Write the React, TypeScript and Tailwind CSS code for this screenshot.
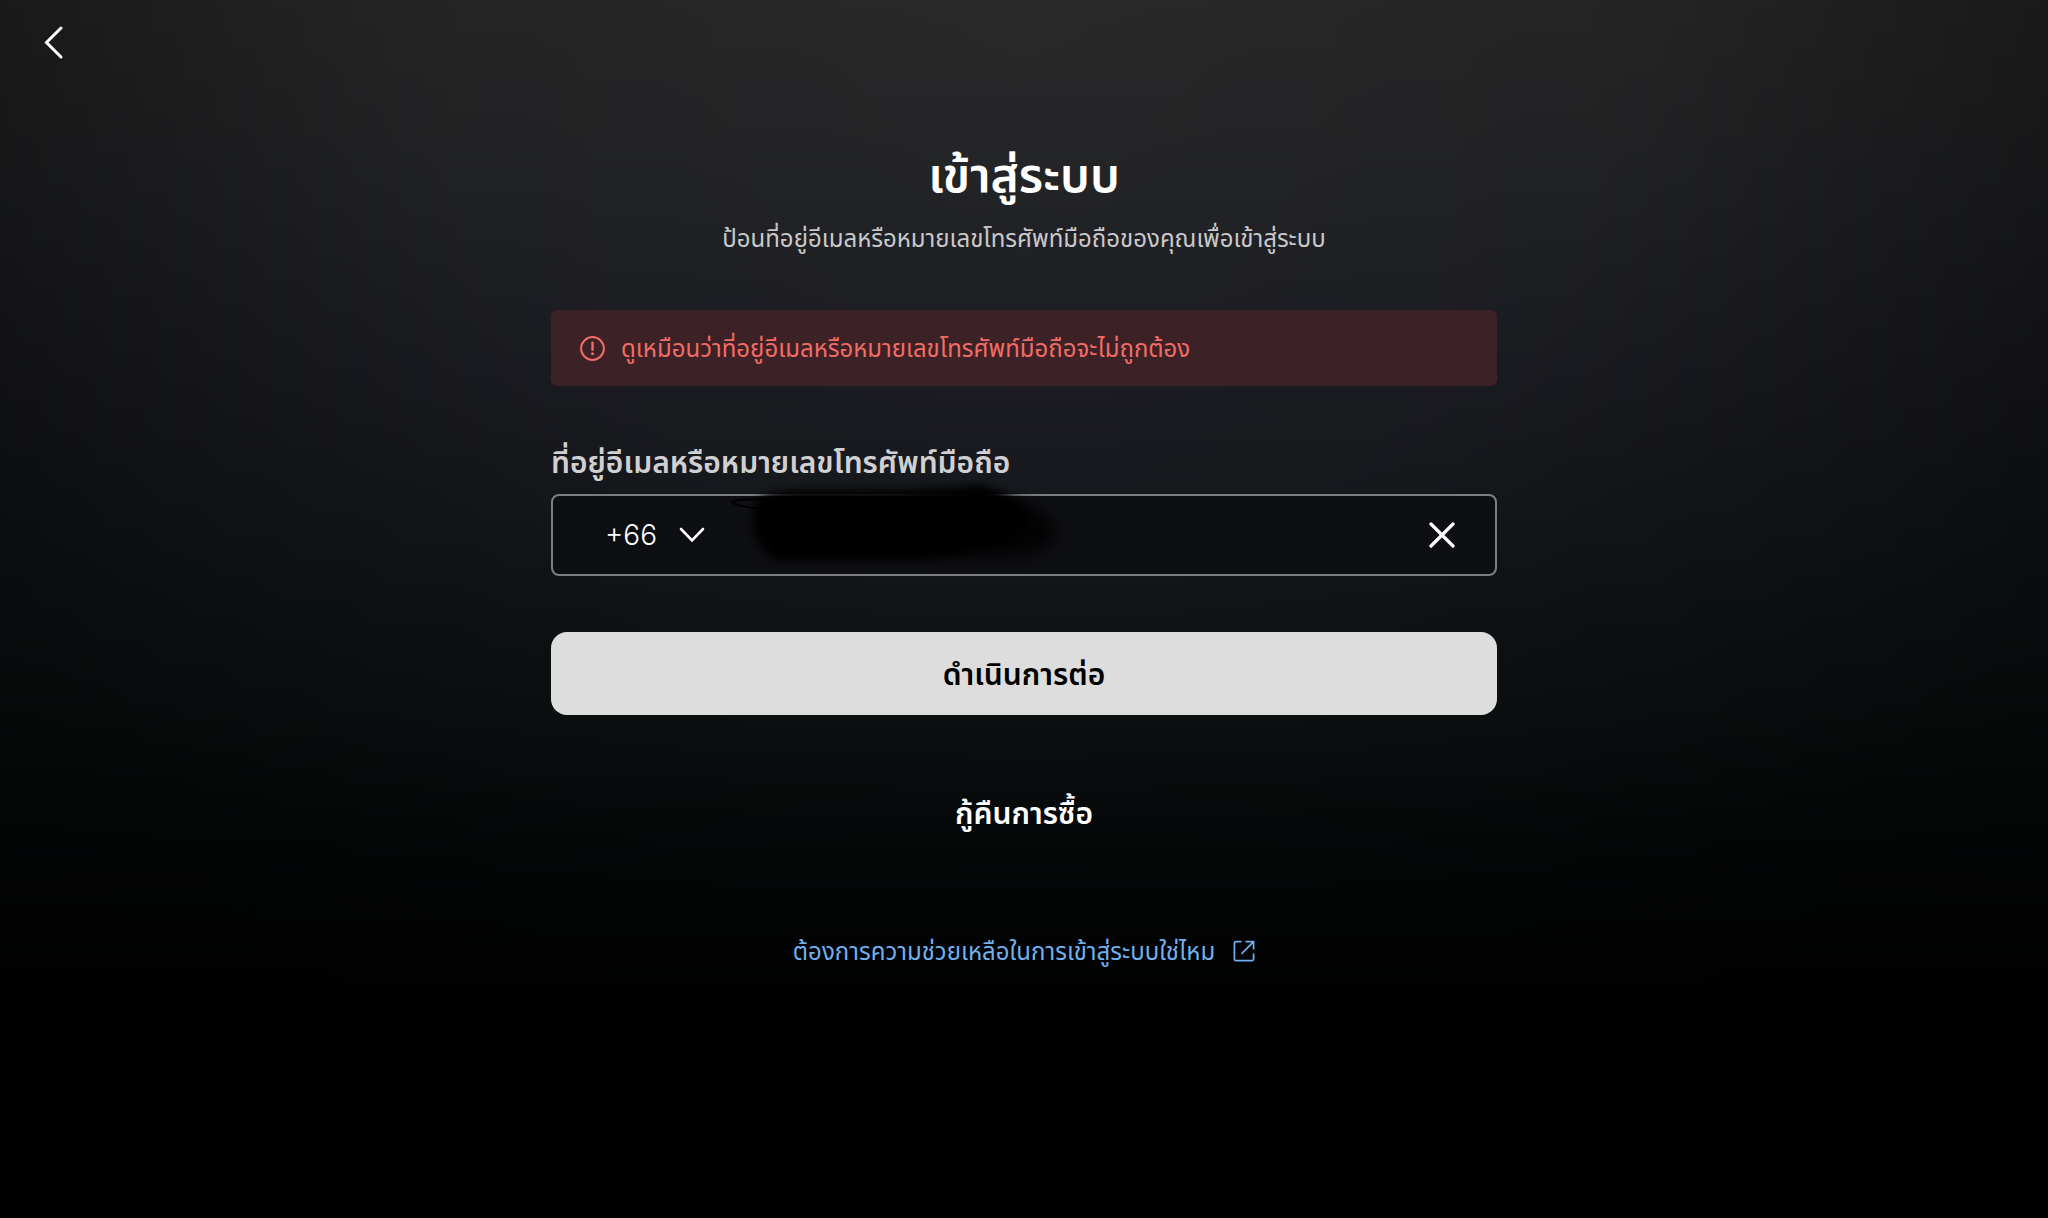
import { useState } from "react";

const DIAL_CODES = ["+66", "+65", "+60", "+62"];

function BackIcon() {
  return (
    <svg width="40" height="40" viewBox="0 0 40 40" fill="none" stroke="currentColor" strokeWidth="3" strokeLinecap="round" strokeLinejoin="miter">
      <path d="M29 6 L14.5 20.5 L29 35" />
    </svg>
  );
}

function AlertIcon() {
  return (
    <svg className="shrink-0" width="26" height="26" viewBox="0 0 26 26" fill="none" stroke="currentColor" strokeWidth="2">
      <circle cx="13.5" cy="13.5" r="11.4" />
      <path d="M13.5 7.8 V14.8" strokeWidth="2.4" strokeLinecap="round" />
      <circle cx="13.5" cy="18.8" r="1.5" fill="currentColor" stroke="none" />
    </svg>
  );
}

function ChevronIcon() {
  return (
    <svg className="pointer-events-none" width="26" height="16" viewBox="0 0 26 16" fill="none" stroke="currentColor" strokeWidth="2.6" strokeLinecap="round">
      <path d="M2 2 L13 13.4 L24 2" />
    </svg>
  );
}

function ClearIcon() {
  return (
    <svg width="26" height="26" viewBox="0 0 26 26" fill="none" stroke="currentColor" strokeWidth="3.2" strokeLinecap="round">
      <path d="M2 2 L24 24 M24 2 L2 24" />
    </svg>
  );
}

function ExternalIcon() {
  return (
    <svg className="shrink-0" width="22" height="22" viewBox="0 0 22 22" fill="none" stroke="currentColor" strokeWidth="1.7">
      <path d="M8.5 1.6 H3 Q1.4 1.6 1.4 3.2 V19 Q1.4 20.6 3 20.6 H19 Q20.6 20.6 20.6 19 V13.5" />
      <path d="M12.5 1.6 H20.6 V9.5 M20.4 1.8 L8.4 13.8" />
    </svg>
  );
}

// Brush strokes that hide the typed number
function Redaction() {
  return (
    <svg className="pointer-events-none absolute left-44 -top-5 z-10" width="360" height="110" viewBox="0 0 360 110" fill="none" aria-hidden="true">
      <defs>
        <filter id="soft" x="-20%" y="-20%" width="140%" height="140%"><feGaussianBlur stdDeviation="4" /></filter>
        <filter id="softer" x="-30%" y="-40%" width="160%" height="180%"><feGaussianBlur stdDeviation="8" /></filter>
      </defs>
      <path d="M40 24 L230 18 Q314 22 326 50 Q334 82 260 82 L40 80 Q14 50 40 24 Z" fill="#000" fillOpacity="0.8" filter="url(#softer)" />
      <path d="M34 20 Q60 12 120 15 Q200 16 250 9 Q284 16 298 36 Q304 58 262 70 Q220 82 180 84 L50 84 Q30 74 26 50 Q22 32 34 20 Z" fill="#000" filter="url(#soft)" />
      <path d="M60 24 Q10 22 3 26 Q6 31 50 35" stroke="#000" strokeWidth="2" />
    </svg>
  );
}

export default function App() {
  const [code, setCode] = useState("+66");
  const [account, setAccount] = useState("");

  return (
    <div className="min-h-screen bg-black bg-[radial-gradient(ellipse_100%_150%_at_50%_0%,transparent_0%,rgba(0,0,0,0.12)_30%,rgba(0,0,0,0.38)_50%,rgba(0,0,0,0.55)_60%,rgba(0,0,0,0.6)_70%),linear-gradient(to_bottom,#292929_0%,#242528_15%,#1e1f25_30%,#171a1f_44%,#101516_58%,#070a0b_70%,#000_84%)] font-['Noto_Sans','Noto_Sans_Thai',sans-serif] text-white">
      <header className="flex h-21 items-center px-8">
        <button type="button" aria-label="ย้อนกลับ" className="cursor-pointer">
          <BackIcon />
        </button>
      </header>

      <main className="mx-auto flex w-full max-w-[946px] flex-col items-center pt-14">
        <h1 className="text-5xl leading-17 font-semibold">เข้าสู่ระบบ</h1>
        <p className="mt-3 text-2xl leading-9 text-[#c9c9cb]">ป้อนที่อยู่อีเมลหรือหมายเลขโทรศัพท์มือถือของคุณเพื่อเข้าสู่ระบบ</p>

        <form className="mt-[54px] flex w-full flex-col" onSubmit={e => e.preventDefault()}>
          <div role="alert" className="flex h-19 items-center gap-4 rounded-md bg-[#3c2126] px-7 text-2xl text-[#f26c66]">
            <AlertIcon />
            <span>ดูเหมือนว่าที่อยู่อีเมลหรือหมายเลขโทรศัพท์มือถือจะไม่ถูกต้อง</span>
          </div>

          <label htmlFor="account" className="mt-14 text-[30px] leading-10 font-semibold text-[#d0d0d2]">
            ที่อยู่อีเมลหรือหมายเลขโทรศัพท์มือถือ
          </label>
          <div className="relative mt-3 flex h-[82px] items-center rounded-lg border-2 border-[#7d7e81] bg-[#0e0f13] pr-10 pl-13">
            <div className="relative flex items-center">
              <select
                aria-label="รหัสประเทศ"
                value={code}
                onChange={e => setCode(e.target.value)}
                className="w-25 appearance-none bg-transparent font-[Inter] text-[28px] font-light outline-none"
              >
                {DIAL_CODES.map(c => <option key={c} className="bg-black">{c}</option>)}
              </select>
              <div className="pointer-events-none absolute right-0 flex">
                <ChevronIcon />
              </div>
            </div>
            <input
              id="account"
              type="text"
              value={account}
              onChange={e => setAccount(e.target.value)}
              className="ml-14 min-w-0 flex-1 bg-transparent font-[Inter] text-[28px] font-light outline-none"
            />
            <button type="button" aria-label="ล้าง" onClick={() => setAccount("")} className="cursor-pointer">
              <ClearIcon />
            </button>
            <Redaction />
          </div>

          <button type="submit" className="mt-14 h-[83px] cursor-pointer rounded-2xl bg-[#dddddd] text-[30px] font-semibold text-black">
            ดำเนินการต่อ
          </button>
        </form>

        <button type="button" className="mt-19 cursor-pointer text-[30px] leading-11 font-semibold">กู้คืนการซื้อ</button>

        <a href="#help" className="mt-[98px] flex items-center gap-[18px] text-2xl leading-9 text-[#6fb1ee]">
          ต้องการความช่วยเหลือในการเข้าสู่ระบบใช่ไหม
          <ExternalIcon />
        </a>
      </main>
    </div>
  );
}
